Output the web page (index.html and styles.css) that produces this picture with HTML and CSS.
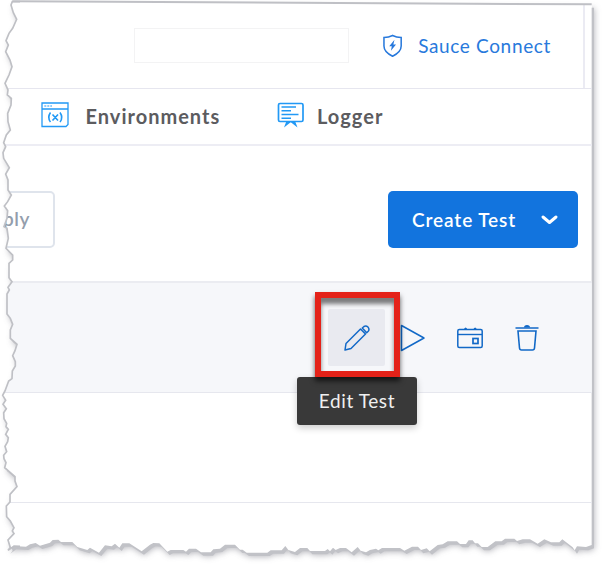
FILE: index.html
```html
<!DOCTYPE html>
<html lang="en">
<head>
<meta charset="utf-8">
<title>Tests</title>
<link rel="stylesheet" href="styles.css">
</head>
<body>
<main class="canvas">
  <svg class="layer" viewBox="0 0 1818 1698" aria-hidden="true">
    <defs>
      <path id="tear" d="M37 5 33 15 40 38 50 58 38 85 27 100 18 122 25 135 17 155 30 180 36 200 27 225 15 250 24 270 22 285 34 295 33 315 23 340 24 365 31 390 19 405 11 428 17 440 9 458 11 475 28 503 17 522 24 540 24 570 34 585 23 605 13 618 23 632 21 655 12 680 21 685 25 715 18 745 38 765 38 780 27 790 27 833 36 845 24 862 28 870 21 882 21 942 31 955 38 973 31 990 31 1015 51 1033 45 1052 38 1067 46 1085 46 1098 37 1113 36 1136 26 1143 15 1173 8 1186 17 1201 9 1213 19 1226 11 1238 12 1256 20 1270 18 1280 25 1288 17 1303 25 1313 23 1325 15 1339 20 1355 11 1366 12 1376 18 1388 14 1403 45 1430 45 1443 51 1460 30 1483 30 1506 19 1518 20 1550 31 1563 42 1583 37 1593 42 1601 24 1620 31 1643 24 1651 42 1638 78 1640 90 1633 107 1629 120 1637 150 1628 158 1620 175 1619 183 1626 217 1626 232 1641 262 1650 270 1643 297 1658 315 1636 335 1639 345 1631 358 1643 367 1630 388 1630 425 1654 450 1634 460 1629 478 1630 502 1655 512 1650 550 1650 558 1655 567 1646 588 1646 603 1657 632 1657 640 1648 660 1646 675 1634 705 1634 720 1649 728 1649 740 1658 802 1658 812 1651 845 1651 856 1638 865 1650 885 1656 900 1644 922 1644 930 1653 975 1653 983 1647 990 1654 999 1643 1007 1650 1020 1644 1038 1644 1055 1657 1073 1641 1082 1652 1098 1657 1110 1650 1128 1646 1135 1651 1146 1644 1200 1644 1213 1652 1236 1640 1254 1640 1263 1650 1280 1645 1289 1654 1313 1635 1328 1633 1343 1624 1371 1624 1380 1632 1398 1632 1406 1621 1418 1621 1425 1630 1434 1630 1445 1641 1463 1641 1486 1624 1505 1624 1515 1616 1543 1616 1551 1623 1568 1618 1590 1618 1613 1631 1633 1618 1653 1627 1678 1627 1687 1618 1718 1642 1724 1651 1731 1639 1758 1641 1775 1635 1775 13Z"/>
      <clipPath id="paper" clipPathUnits="userSpaceOnUse"><use href="#tear" transform="scale(.333333)"/></clipPath>
    </defs>
    <use href="#tear" class="soft-shadow"/>
    <use href="#tear" class="hard-shadow" transform="translate(7 10)"/>
  </svg>

  <div class="sheet">
    <header class="topbar">
      <div class="search"></div>
      <a class="connect">
        <svg class="shield" viewBox="0 0 20 24"><path d="M1 3.2Q6 3 10 1Q14 3 19 3.2V12C19 17 14.5 20.5 10 22.7C5.500 20.500 1 17 1 12Z" fill="none" stroke="currentColor" stroke-width="1.6"/><path d="M12 5.500 6.500 12.300H9.200L8.300 17 13.600 10.500H10.800Z" fill="currentColor"/></svg>
        <span>Sauce Connect</span>
      </a>
      <div class="divider"></div>
    </header>

    <nav class="tabs">
      <a class="tab environments">
        <svg class="tab-icon" viewBox="0 0 28 26"><path d="M1 1H27V22.500L25 24.500H1ZM1 7H27" fill="none" stroke="currentColor" stroke-width="1.300"/><path d="M3.300 4H11" stroke="currentColor" stroke-width="1.100" stroke-dasharray="2 1"/><path d="M9.500 10.500Q6 15.500 9.500 20M19 10.500Q22.500 15.500 19 20M11.500 12.500 17 18.500M17 12.500 11.500 18.500" fill="none" stroke="currentColor" stroke-width="1.600"/></svg>
        <span>Environments</span>
      </a>
      <a class="tab logger">
        <svg class="tab-icon" viewBox="0 0 28 26"><rect x="1.500" y="1.500" width="24.500" height="18" rx="1.500" fill="none" stroke="currentColor" stroke-width="1.700"/><path d="M4.500 5H19M4.500 8.700H14M4.500 12.500H21.500M4.500 16.200H14" stroke="currentColor" stroke-width="1.600"/><path d="M9.500 19 7 25.500 14 20ZM18 19 20.500 25.500 13.500 20Z" fill="currentColor"/></svg>
        <span>Logger</span>
      </a>
    </nav>

    <section class="actions">
      <button class="apply">ply</button>
      <button class="create"><span>Create Test</span><svg class="chevron" viewBox="0 0 18 12"><path d="M2.500 3 9 8.500 15.500 3" fill="none" stroke="currentColor" stroke-width="3" stroke-linecap="round" stroke-linejoin="round"/></svg></button>
    </section>

    <section class="row active">
      <button class="tool edit"><svg viewBox="0 0 26 26"><path d="M1 25 2 18.500 16.500 4 21.500 9 7 23.500ZM18.300 3 20 1.500Q22 .3 24.200 2.300 25.700 4.500 24.200 6.300L22.700 7.800ZM18.300 3 22.700 7.800" fill="none" stroke="currentColor" stroke-width="1.500" stroke-linejoin="round"/></svg></button>
      <button class="tool play"><svg viewBox="0 0 26 28"><path d="M1.500 1.500V26.500L24 14Z" fill="none" stroke="currentColor" stroke-width="1.500" stroke-linejoin="round"/></svg></button>
      <button class="tool calendar"><svg viewBox="0 0 26 24"><path d="M1 8.500H25" stroke="currentColor" stroke-width="1.400"/><rect x=".8" y="3.500" width="24.400" height="18" rx="1.500" fill="none" stroke="currentColor" stroke-width="1.500"/><path d="M7 4a1.600 2.500 0 0 1 3.200 0M16.500 4a1.600 2.500 0 0 1 3.200 0" fill="currentColor"/><rect x="16" y="12.500" width="5" height="5" fill="none" stroke="currentColor" stroke-width="1.700"/></svg></button>
      <button class="tool trash"><svg viewBox="0 0 24 27"><path d="M.5 4H23.500" stroke="currentColor" stroke-width="1.700"/><path d="M9 3.500a3 2.500 0 0 1 6 0" fill="currentColor"/><path d="M3 7H21L19.500 24Q19.300 26 17.500 26H6.500Q4.700 26 4.500 24Z" fill="none" stroke="currentColor" stroke-width="1.600"/></svg></button>
      <div class="tooltip">Edit Test</div>
      <div class="highlight"></div>
    </section>

    <section class="row"></section>
  </div>

  <svg class="layer" viewBox="0 0 1818 1698" aria-hidden="true">
    <clipPath id="left"><rect x="0" y="0" width="60" height="1655"/></clipPath>
    <use href="#tear" class="edge" clip-path="url(#left)"/>
    <path class="edge top-edge" d="M37 4 1775 13"/>
  </svg>
</main>
</body>
</html>
```
FILE: styles.css
```css
* { box-sizing: border-box; }
body { margin: 0; background: #fff; font-family: Lato, "Liberation Sans", sans-serif; }
button { font: inherit; border: 0; padding: 0; background: none; }
.canvas { position: relative; width: 606px; height: 566px; overflow: hidden; }
.layer { position: absolute; inset: 0; width: 606px; height: 566px; pointer-events: none; }
.soft-shadow { fill: #fff; filter: drop-shadow(8px 12px 9px rgba(60, 60, 75, .38)); }
.hard-shadow { fill: #c1c2c7; }
.edge { fill: none; stroke: #bfc0c5; stroke-width: 5px; }
.top-edge { stroke-width: 6px; }

.sheet { position: relative; width: 592px; height: 566px; background: #fff; clip-path: url(#paper); }
.topbar { display: flex; height: 89px; padding-left: 134px; border-bottom: 1px solid #e6e6ef; }
.search { width: 215px; height: 35px; margin-top: 28px; border: 1px solid #f3f3f4; }
.connect { display: flex; align-items: center; width: 168px; height: 28px; margin: 32px 0 0 34px; color: #2879dc; font-size: 19px; letter-spacing: .65px; white-space: nowrap; }
.shield { width: 20px; height: 24px; margin-right: 16px; }
.connect span { margin-top: -1px; }
.divider { width: 2px; margin-left: 32px; background: #ebebf3; }
.tabs { display: flex; height: 57px; border-bottom: 2px solid #ededf4; color: #5c5c5f; font-size: 20px; font-weight: 700; letter-spacing: 1px; }
.tab { display: flex; align-items: center; height: 55px; }
.tab span { margin-top: -1px; }
.environments { width: 236px; margin-left: 41px; }
.tab-icon { width: 28px; height: 26px; margin: -3px 16.500px 0 0; color: #2299f5; }
.logger .tab-icon { margin-right: 12px; }
.actions { display: flex; justify-content: space-between; height: 137px; padding: 45px 14px 0 0; border-bottom: 2px solid #ebecf1; }
.apply { width: 75px; height: 57px; margin-left: -20px; padding: 0 23px 2px 0; border: 2px solid #dfe4ec; border-radius: 5px; color: #939dac; font-size: 19px; font-weight: 600; text-align: right; letter-spacing: .6px; }
.create { display: flex; align-items: center; width: 190px; height: 57px; padding-left: 24px; border-radius: 5px; background: #1274de; color: #fff; font-size: 19px; font-weight: 600; letter-spacing: .9px; white-space: nowrap; }
.create span { width: 128px; text-align: left; }
.chevron { width: 19px; height: 12px; }
.row { position: relative; display: flex; height: 110px; border-bottom: 1px solid #e6e7ee; }
.row.active { padding: 26px 0 0 328px; background: #f6f7fa; }
.tool { display: flex; align-items: center; justify-content: center; width: 57px; height: 57px; color: #1269c7; }
.edit { border-radius: 2px; background: #e9eaf0; }
.edit svg { width: 26px; height: 26px; }
.play svg { width: 26px; height: 28px; margin-right: 1px; }
.calendar svg { width: 26px; height: 24px; margin-right: 2px; }
.trash svg { width: 24px; height: 27px; margin-right: 2px; }
.tooltip { position: absolute; z-index: 2; left: 297px; top: 94px; width: 120px; height: 48px; border-radius: 3px; background: #393939; color: #f0f0f0; font-size: 19px; line-height: 48px; text-align: center; letter-spacing: .6px; box-shadow: 0 3px 7px rgba(0, 0, 0, .2); }
.highlight { position: absolute; z-index: 3; left: 315px; top: 9px; width: 85px; height: 85px; border: 6px solid #e42219; box-shadow: 0 4px 5px rgba(0, 0, 0, .65), inset 0 6px 4px rgba(0, 0, 0, .5); }
```
